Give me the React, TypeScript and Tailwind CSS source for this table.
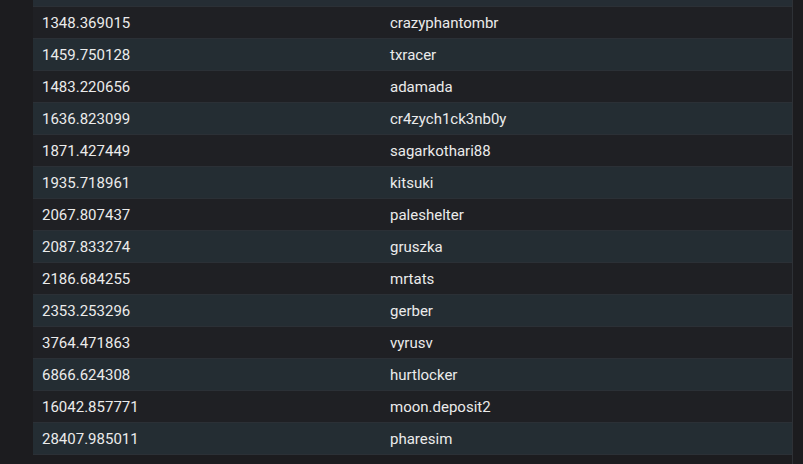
import React from "react";

const rows: [string, string][] = [
  ["1348.369015", "crazyphantombr"],
  ["1459.750128", "txracer"],
  ["1483.220656", "adamada"],
  ["1636.823099", "cr4zych1ck3nb0y"],
  ["1871.427449", "sagarkothari88"],
  ["1935.718961", "kitsuki"],
  ["2067.807437", "paleshelter"],
  ["2087.833274", "gruszka"],
  ["2186.684255", "mrtats"],
  ["2353.253296", "gerber"],
  ["3764.471863", "vyrusv"],
  ["6866.624308", "hurtlocker"],
  ["16042.857771", "moon.deposit2"],
  ["28407.985011", "pharesim"],
];

export default function App() {
  return (
    <div
      className="w-[803px] h-[464px] overflow-hidden bg-[#1c1c1f] flex"
      style={{ fontFamily: "Roboto, 'Liberation Sans', sans-serif" }}
    >
      <div className="w-[33px] shrink-0" />
      <div className="w-[759px] shrink-0 flex flex-col">
        <div className="h-[6px] bg-[#252d34]" />
        {rows.map(([a, b], i) => (
          <div
            key={i}
            className={
              "h-[32px] flex items-center pt-[2px] border-t border-[#2b3036] text-[15px] text-[#ebebeb] " +
              (i % 2 === 0 ? "bg-[#1f2024]" : "bg-[#242d33]")
            }
          >
            <div className="w-[348px] pl-[9px] shrink-0">{a}</div>
            <div className="pl-[9px]">{b}</div>
          </div>
        ))}
        <div className="h-[1px] bg-[#2b3036]" />
      </div>
      <div className="w-[11px] shrink-0 border-l border-[#2e3136] bg-[#1c1c1f]" />
    </div>
  );
}
